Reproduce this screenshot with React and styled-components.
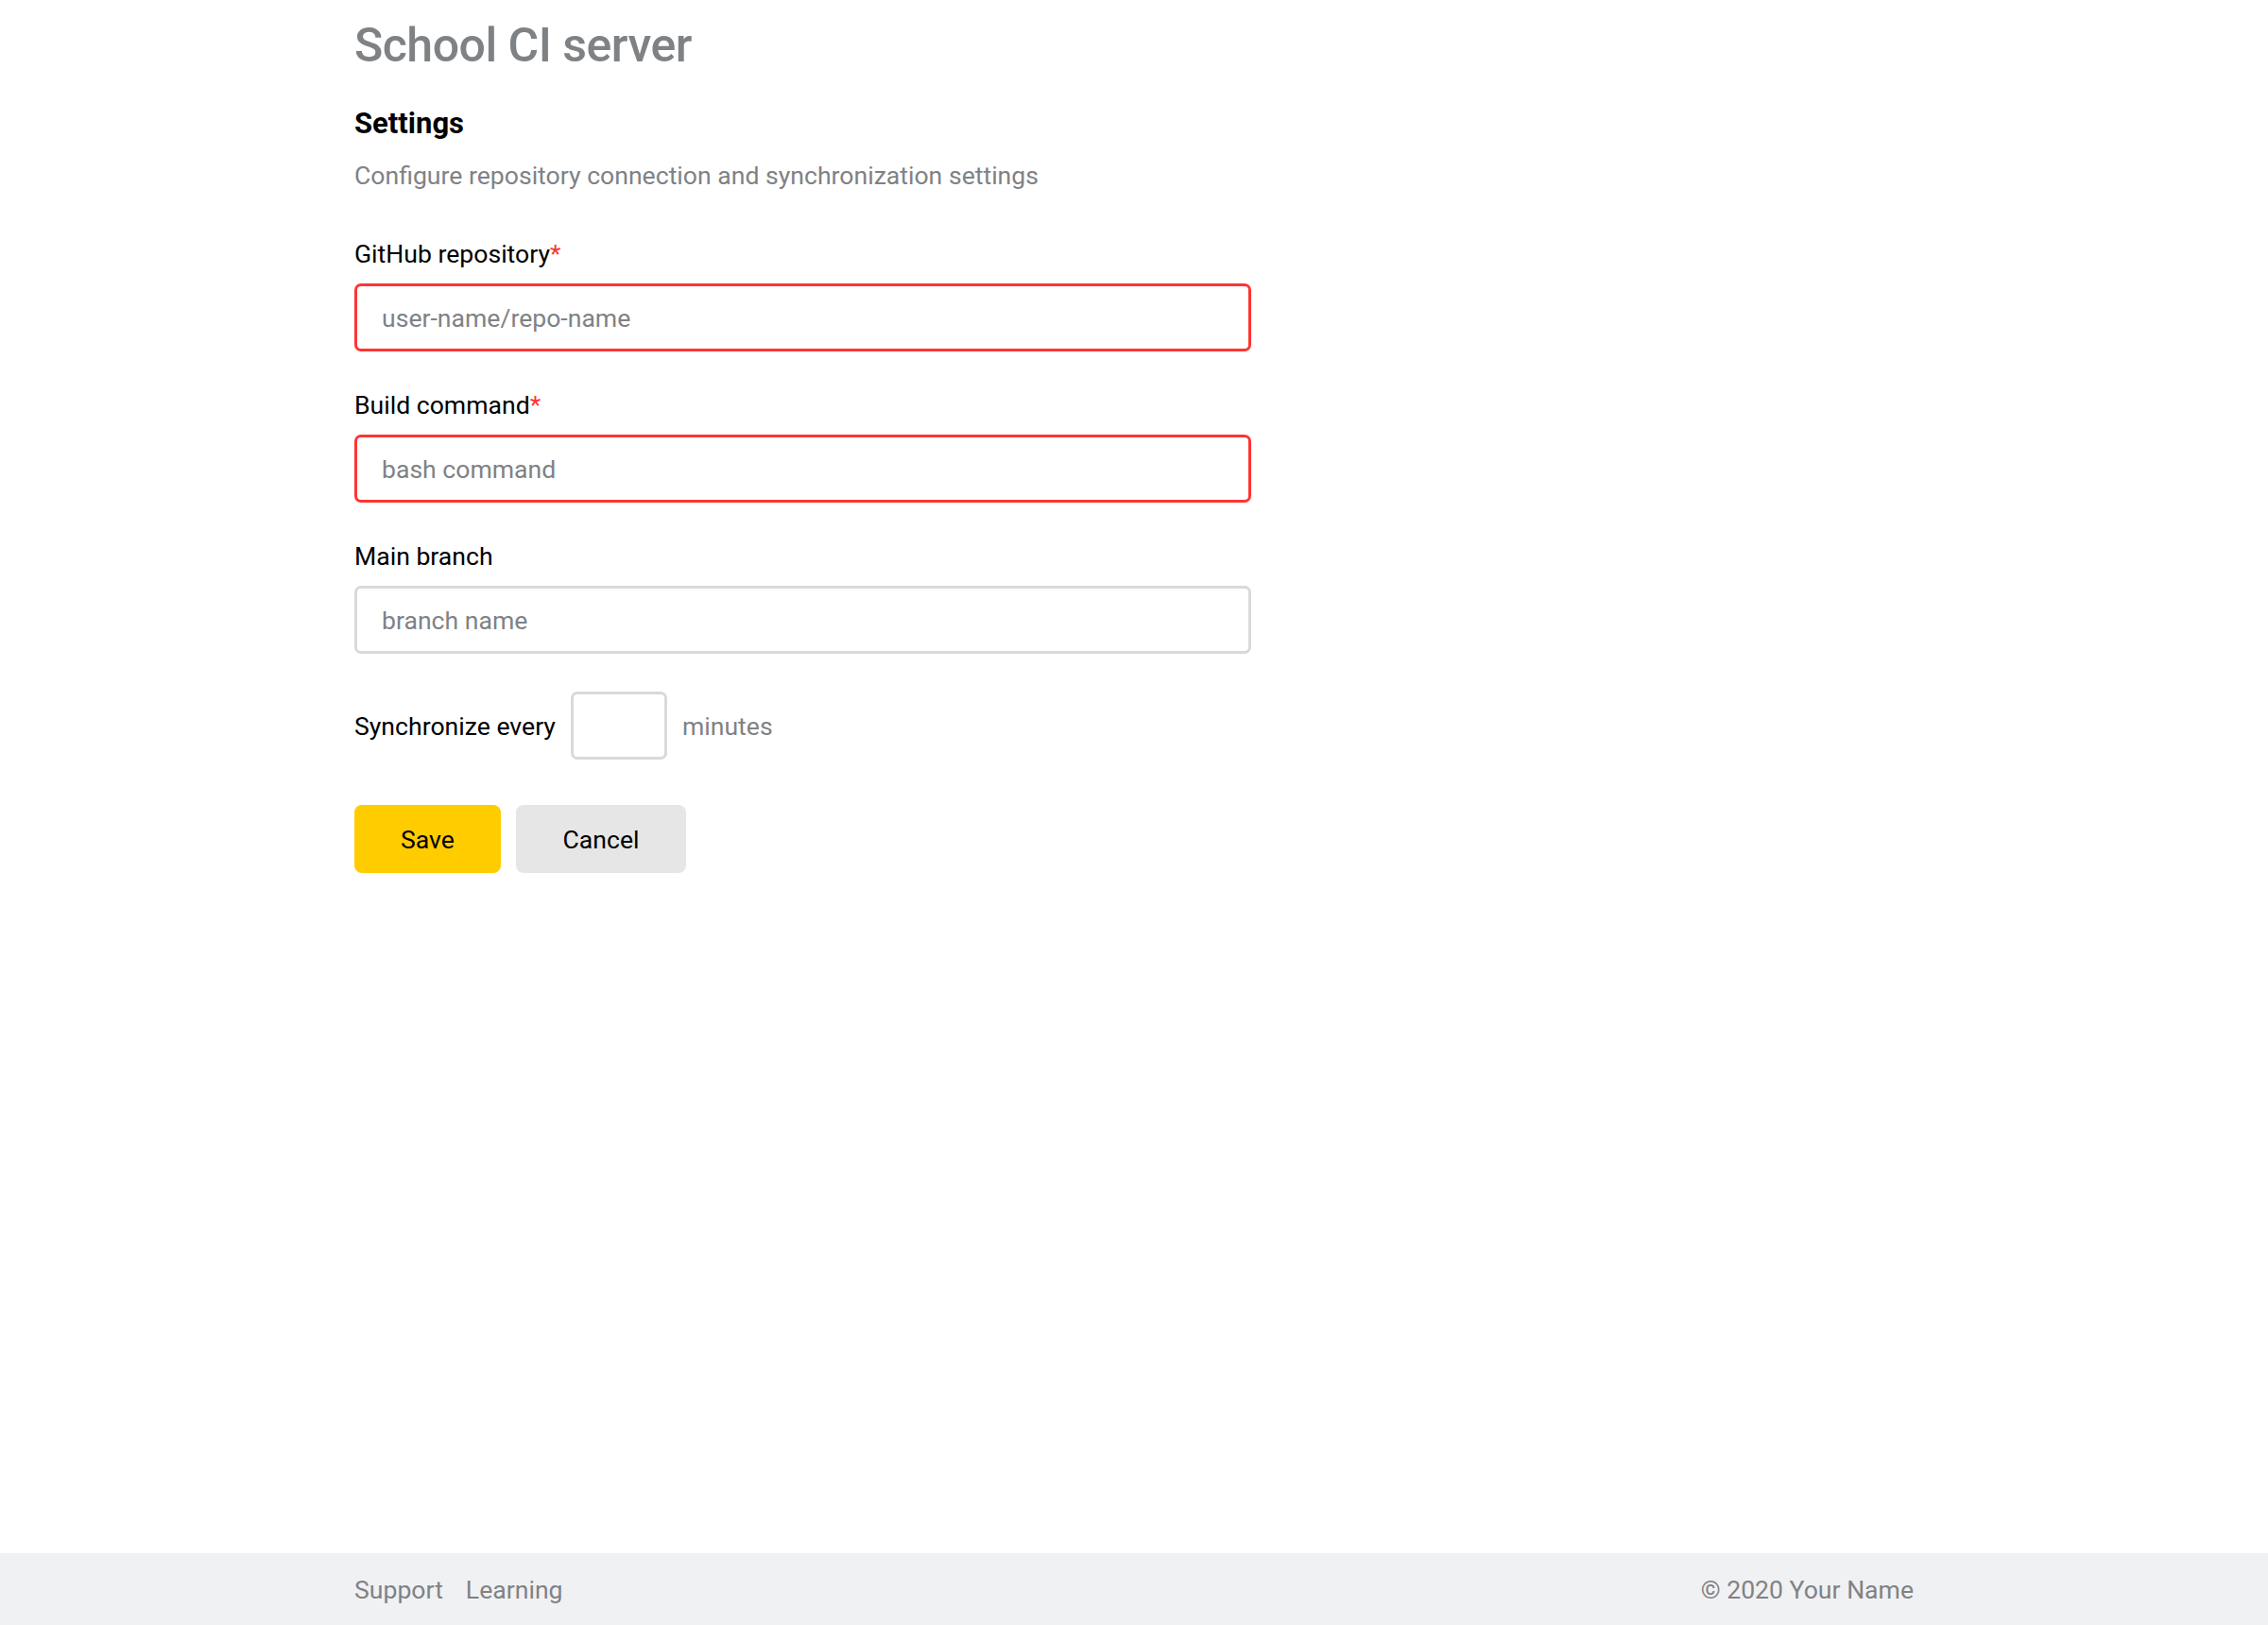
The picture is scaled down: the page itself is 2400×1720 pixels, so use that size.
import React from "react";
import styled, { createGlobalStyle } from "styled-components";

const GlobalStyle = createGlobalStyle`
  html, body {
    margin: 0;
    padding: 0;
    background: #fff;
  }
  body {
    font-family: Roboto, "Noto Sans", Arial, sans-serif;
    color: #000;
  }
  #root {
    min-height: 100vh;
  }
`;

const Page = styled.div`
  min-height: 100vh;
  display: flex;
  flex-direction: column;
`;

const Main = styled.main`
  flex: 1;
  width: 1650px;
  margin: 0 auto;
`;

const Title = styled.h1`
  margin: 0;
  padding-top: 17px;
  font-size: 50px;
  line-height: 62px;
  font-weight: 500;
  color: #7f8285;
  letter-spacing: -0.5px;
`;

const Section = styled.section`
  padding-top: 32px;
`;

const Heading = styled.h2`
  margin: 0;
  font-size: 31px;
  line-height: 40px;
  font-weight: 700;
`;

const Description = styled.p`
  margin: 17px 0 0;
  font-size: 26.6px;
  line-height: 36px;
  color: #7f8285;
`;

const Form = styled.form`
  margin-top: 47px;
  display: flex;
  flex-direction: column;
  gap: 39px;
`;

const Field = styled.div`
  display: flex;
  flex-direction: column;
  gap: 13px;
`;

const Label = styled.label`
  font-size: 26.6px;
  line-height: 36px;
`;

const Required = styled.span`
  color: #ff3333;
`;

const Input = styled.input`
  box-sizing: border-box;
  width: ${({ $width }) => $width || "949px"};
  height: 72px;
  padding: 0 26px;
  border: 3px solid ${({ $error }) => ($error ? "#ff3333" : "#d9d9d9")};
  border-radius: 7px;
  font-family: inherit;
  font-size: 26.6px;
  color: #000;
  outline: none;
  &::placeholder {
    color: #7f8285;
  }
`;

const SyncRow = styled.div`
  display: flex;
  align-items: center;
  gap: 16px;
  margin-top: 1px;
  font-size: 26.6px;
`;

const Muted = styled.span`
  color: #7f8285;
`;

const Buttons = styled.div`
  display: flex;
  gap: 16px;
  margin-top: 9px;
`;

const Button = styled.button`
  width: ${({ $width }) => $width};
  height: 72px;
  padding: 0;
  border: none;
  border-radius: 8px;
  background: ${({ $primary }) => ($primary ? "#ffcc00" : "#e6e6e6")};
  font-family: inherit;
  font-size: 26.6px;
  color: #000;
  cursor: pointer;
`;

const Footer = styled.footer`
  height: 76px;
  background: #f0f1f3;
`;

const FooterInner = styled.div`
  width: 1650px;
  height: 100%;
  margin: 0 auto;
  display: flex;
  align-items: center;
  justify-content: space-between;
  font-size: 26.6px;
  color: #7f8285;
`;

const Links = styled.nav`
  display: flex;
  gap: 24px;
`;

const FooterLink = styled.a`
  color: inherit;
  text-decoration: none;
`;

const App = () => {
  return (
    <Page>
      <GlobalStyle />
      <Main>
        <Title>School CI server</Title>
        <Section>
          <Heading>Settings</Heading>
          <Description>
            Configure repository connection and synchronization settings
          </Description>
          <Form onSubmit={(e) => e.preventDefault()}>
            <Field>
              <Label>
                GitHub repository<Required>*</Required>
              </Label>
              <Input $error placeholder="user-name/repo-name" />
            </Field>
            <Field>
              <Label>
                Build command<Required>*</Required>
              </Label>
              <Input $error placeholder="bash command" />
            </Field>
            <Field>
              <Label>Main branch</Label>
              <Input placeholder="branch name" />
            </Field>
            <SyncRow>
              <span>Synchronize every</span>
              <Input $width="102px" />
              <Muted>minutes</Muted>
            </SyncRow>
            <Buttons>
              <Button $primary $width="155px">Save</Button>
              <Button $width="180px">Cancel</Button>
            </Buttons>
          </Form>
        </Section>
      </Main>
      <Footer>
        <FooterInner>
          <Links>
            <FooterLink href="#">Support</FooterLink>
            <FooterLink href="#">Learning</FooterLink>
          </Links>
          <span>© 2020 Your Name</span>
        </FooterInner>
      </Footer>
    </Page>
  );
};

export default App;
